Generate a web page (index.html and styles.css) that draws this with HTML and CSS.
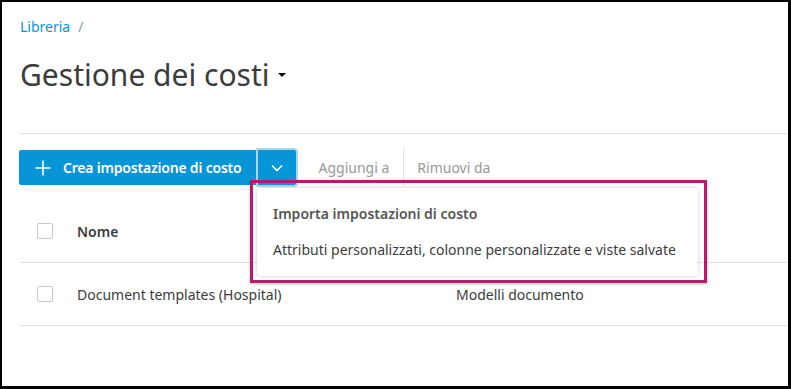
FILE: index.html
```html
<!DOCTYPE html>
<html lang="it">

<head>
    <meta charset="UTF-8">
    <meta name="viewport" content="width=device-width, initial-scale=1.0">
    <title>Gestione dei costi</title>
    <link rel="stylesheet" href="styles.css">
</head>

<body>
    <div class="frame">
        <nav class="crumbs">
            <a href="#" class="crumb">Libreria</a>
            <span class="crumb-sep">/</span>
        </nav>

        <h1 class="title">Gestione dei costi <span class="title-caret"></span></h1>

        <div class="rule"></div>

        <div class="toolbar">
            <div class="split">
                <button class="btn-main">
                    <svg class="plus" width="16" height="16" viewBox="0 0 16 16">
                        <path d="M8 0.5v15M0.5 8h15" stroke="#fff" stroke-width="1.6" fill="none" />
                    </svg>
                    <span>Crea impostazione di costo</span>
                </button>
                <button class="btn-caret">
                    <svg width="12" height="8" viewBox="0 0 12 8">
                        <path d="M1 1.5l5 5 5-5" stroke="#fff" stroke-width="1.6" fill="none" />
                    </svg>
                </button>

                <div class="callout">
                    <ul class="menu">
                        <li class="menu-item menu-head">Importa impostazioni di costo</li>
                        <li class="menu-item">Attributi personalizzati, colonne personalizzate e viste salvate</li>
                    </ul>
                </div>
            </div>
            <button class="tool">Aggiungi a</button>
            <span class="tool-sep"></span>
            <button class="tool">Rimuovi da</button>
        </div>

        <div class="table">
            <div class="row row-head">
                <span class="check"></span>
                <span class="cell cell-name">Nome</span>
                <span class="cell cell-type">Tipo</span>
            </div>
            <div class="row">
                <span class="check"></span>
                <span class="cell cell-name">Document templates (Hospital)</span>
                <span class="cell cell-type">Modelli documento</span>
            </div>
        </div>
    </div>
</body>

</html>
```

FILE: styles.css
```css
* {
    margin: 0px;
    padding: 0px;
    box-sizing: border-box;
}

body {
    background-color: #fff;
    font-family: "Noto Sans", "Lato", sans-serif;
    color: #3c3c3c;
}

.frame {
    width: 791px;
    height: 389px;
    border: 2px solid #000;
    border-right-width: 3px;
    border-bottom-width: 3px;
    padding-left: 18px;
    overflow: hidden;
}

.crumbs {
    display: flex;
    align-items: center;
    gap: 8px;
    height: 20px;
    margin-top: 14px;
    font-size: 14px;
}

.crumb {
    color: #0696d7;
    text-decoration: none;
}

.crumb-sep {
    color: #999;
}

.title {
    display: flex;
    align-items: center;
    gap: 8px;
    margin-top: 19px;
    height: 38px;
    font-size: 30px;
    font-weight: 400;
    color: #3c3c3c;
}

.title-caret {
    width: 0;
    height: 0;
    border-left: 4px solid transparent;
    border-right: 4px solid transparent;
    border-top: 4px solid #000;
    margin-top: 2px;
}

.rule {
    height: 1px;
    background-color: #e0e0e0;
    margin-top: 40px;
}

.toolbar {
    display: flex;
    align-items: center;
    margin-top: 16px;
    height: 35px;
}

.split {
    position: relative;
    display: flex;
    height: 35px;
    margin-left: -1px;
}

.btn-main,
.btn-caret {
    border: none;
    background-color: #0696d7;
    color: #fff;
    font-family: inherit;
    font-size: 14px;
    font-weight: 600;
    height: 35px;
}

.btn-main {
    display: flex;
    align-items: center;
    gap: 12px;
    padding: 0 15px 0 16px;
    white-space: nowrap;
    letter-spacing: -0.2px;
    border-radius: 2px 0 0 2px;
}

.plus {
    flex-shrink: 0;
}

.btn-caret {
    width: 38px;
    margin-left: 1px;
    border-radius: 0 2px 2px 0;
    box-shadow: 0 0 0 2px #a8d8ef;
    display: flex;
    align-items: center;
    justify-content: center;
}

.callout {
    position: absolute;
    left: 231px;
    top: 30px;
    width: 457px;
    height: 103px;
    border: 3px solid #b8196b;
    padding: 5px 6px 4px 4px;
    box-shadow: 0 1px 3px rgba(0, 0, 0, 0.25);
    z-index: 2;
}

.menu {
    list-style: none;
    height: 100%;
    background-color: #fff;
    border-radius: 4px;
    box-shadow: 0 0 4px rgba(0, 0, 0, 0.2);
    padding-top: 8px;
}

.menu-item {
    height: 36px;
    line-height: 36px;
    padding-left: 16px;
    font-size: 14px;
    color: #3c3c3c;
    white-space: nowrap;
}

.menu-head {
    font-weight: 600;
    color: #555;
}

.tool {
    border: none;
    background: none;
    font-family: inherit;
    font-size: 14px;
    color: #999;
    padding: 0 14px 0 23px;
}

.tool-sep {
    width: 1px;
    height: 37px;
    background-color: #e0e0e0;
}

.tool-sep + .tool {
    padding-left: 13px;
}

.table {
    margin-top: 15px;
}

.row {
    display: flex;
    align-items: center;
    height: 63px;
    border-bottom: 1px solid #e0e0e0;
    font-size: 14px;
}

.row-head {
    font-weight: 600;
}

.check {
    width: 16px;
    height: 16px;
    border: 1px solid #c8c8c8;
    border-radius: 2px;
    margin-left: 17px;
}

.cell-name {
    margin-left: 24px;
    width: 379px;
    white-space: nowrap;
}

.row-head .cell-type {
    color: #3c3c3c;
}
```
